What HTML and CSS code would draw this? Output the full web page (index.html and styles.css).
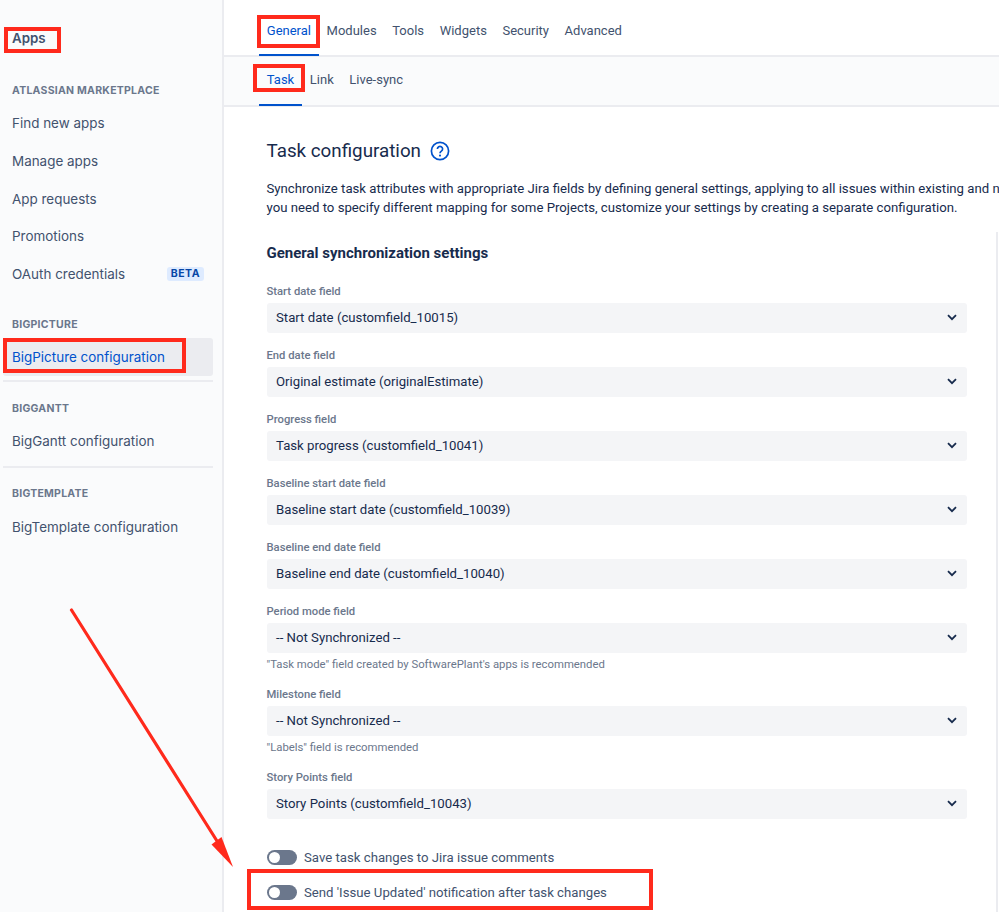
FILE: index.html
```html
<!DOCTYPE html>
<html lang="en">
<head>
<meta charset="utf-8">
<title>BigPicture configuration</title>
<link rel="stylesheet" href="styles.css">
</head>
<body>
<div class="page">
  <aside class="sidebar">
    <h2 class="side-title">Apps</h2>
    <h3 class="side-group first">ATLASSIAN MARKETPLACE</h3>
    <a class="side-link">Find new apps</a>
    <a class="side-link">Manage apps</a>
    <a class="side-link">App requests</a>
    <a class="side-link">Promotions</a>
    <a class="side-link">OAuth credentials <span class="beta">BETA</span></a>
    <h3 class="side-group">BIGPICTURE</h3>
    <a class="side-link active">BigPicture configuration</a>
    <div class="side-section">
      <h3 class="side-group inner">BIGGANTT</h3>
      <a class="side-link">BigGantt configuration</a>
    </div>
    <div class="side-section">
      <h3 class="side-group inner">BIGTEMPLATE</h3>
      <a class="side-link">BigTemplate configuration</a>
    </div>
  </aside>
  <main class="main">
    <nav class="tabs">
      <a class="tab current">General</a>
      <a class="tab">Modules</a>
      <a class="tab">Tools</a>
      <a class="tab">Widgets</a>
      <a class="tab">Security</a>
      <a class="tab">Advanced</a>
    </nav>
    <nav class="subtabs">
      <a class="tab current">Task</a>
      <a class="tab">Link</a>
      <a class="tab">Live-sync</a>
    </nav>
    <div class="content">
      <h1 class="page-title">Task configuration
        <svg class="help" viewBox="0 0 20 20" width="20" height="20" aria-hidden="true">
          <circle cx="10" cy="10" r="8.6" fill="none" stroke="#0052cc" stroke-width="1.7"/>
          <path d="M7.4 7.9a2.6 2.6 0 1 1 4 2.2c-.9.6-1.4 1-1.4 2.1" fill="none" stroke="#0052cc" stroke-width="1.7"/>
          <circle cx="10" cy="14.6" r="1.05" fill="#0052cc"/>
        </svg>
      </h1>
      <p class="intro">Synchronize task attributes with appropriate Jira fields by defining general settings, applying to all issues within existing and new Projects. If<br>you need to specify different mapping for some Projects, customize your settings by creating a separate configuration.</p>
      <section class="settings">
        <h2 class="settings-title">General synchronization settings</h2>
        <div class="field"><label class="field-label">Start date field</label><div class="select">Start date (customfield_10015)<svg class="chev" viewBox="0 0 10 7"><path d="M1 1.2l4 4 4-4"/></svg></div></div>
        <div class="field"><label class="field-label">End date field</label><div class="select">Original estimate (originalEstimate)<svg class="chev" viewBox="0 0 10 7"><path d="M1 1.2l4 4 4-4"/></svg></div></div>
        <div class="field"><label class="field-label">Progress field</label><div class="select">Task progress (customfield_10041)<svg class="chev" viewBox="0 0 10 7"><path d="M1 1.2l4 4 4-4"/></svg></div></div>
        <div class="field"><label class="field-label">Baseline start date field</label><div class="select">Baseline start date (customfield_10039)<svg class="chev" viewBox="0 0 10 7"><path d="M1 1.2l4 4 4-4"/></svg></div></div>
        <div class="field"><label class="field-label">Baseline end date field</label><div class="select">Baseline end date (customfield_10040)<svg class="chev" viewBox="0 0 10 7"><path d="M1 1.2l4 4 4-4"/></svg></div></div>
        <div class="field"><label class="field-label">Period mode field</label><div class="select">-- Not Synchronized --<svg class="chev" viewBox="0 0 10 7"><path d="M1 1.2l4 4 4-4"/></svg></div><p class="hint">"Task mode" field created by SoftwarePlant's apps is recommended</p></div>
        <div class="field"><label class="field-label">Milestone field</label><div class="select">-- Not Synchronized --<svg class="chev" viewBox="0 0 10 7"><path d="M1 1.2l4 4 4-4"/></svg></div><p class="hint">"Labels" field is recommended</p></div>
        <div class="field"><label class="field-label">Story Points field</label><div class="select">Story Points (customfield_10043)<svg class="chev" viewBox="0 0 10 7"><path d="M1 1.2l4 4 4-4"/></svg></div></div>
        <div class="toggle-row first"><span class="toggle"></span>Save task changes to Jira issue comments</div>
        <div class="toggle-row"><span class="toggle"></span>Send 'Issue Updated' notification after task changes</div>
      </section>
    </div>
  </main>
  <div class="mark mark-apps"></div>
  <div class="mark mark-bp"></div>
  <div class="mark mark-general"></div>
  <div class="mark mark-task"></div>
  <div class="mark mark-send"></div>
  <svg class="arrow" viewBox="0 0 999 912" aria-hidden="true">
    <path d="M71.5 610L217 841" stroke="#ff2a1c" stroke-width="3.2" stroke-linecap="round" fill="none"/>
    <path d="M233 867L211.500 844.500L221.500 837Z" fill="#ff2a1c"/>
  </svg>
</div>
</body>
</html>
```
FILE: styles.css
```css
* { box-sizing: border-box; }
html, body { margin: 0; padding: 0; }
body { background: #fff; color: #172b4d; font-family: Roboto, "Liberation Sans", sans-serif; font-size: 14px; }
.page { position: relative; display: flex; width: 999px; height: 912px; overflow: hidden; }

.sidebar { flex: 0 0 224px; height: 912px; padding: 0 9px 0 3px; background: #fafbfc; border-right: 2px solid #ebecf0; font-family: Inter, Roboto, sans-serif; }
.side-title { margin: 30px 0 0 9px; font-size: 13.300px; line-height: 17px; font-weight: 600; color: #42526e; }
.side-group { margin: 25px 0 0 9px; font-size: 10.500px; line-height: 14px; font-weight: 700; letter-spacing: .25px; color: #6b778c; }
.side-group.first { margin-top: 37px; }
.side-group.inner { margin-top: 0; }
.side-link { display: flex; align-items: center; justify-content: space-between; height: 37.700px; padding: 0 9px; font-size: 13.450px; color: #42526e; border-radius: 3px; }
.side-group.first + .side-link { margin-top: 6.300px; }
.side-link.active { margin-top: 6px; height: 38px; background: #ebecf0; color: #0052cc; }
.side-section { margin-top: 6px; padding-top: 19.500px; border-top: 2px solid #ebecf0; }
.active + .side-section { margin-top: 4px; padding-top: 20.500px; }
.side-section .side-link { height: 38px; margin-top: 6.500px; }
.active + .side-section .side-link { margin-top: 5.500px; }
.beta { padding: 1px 4px; border-radius: 3px; background: #deebff; color: #0747a6; font-size: 10.500px; line-height: 12px; font-weight: 700; letter-spacing: .5px; }

.main { flex: 1 1 auto; min-width: 0; padding-left: 35px; }
.main .subtabs, .main .tabs { margin-left: -35px; padding-left: 35px; }
.tabs { display: flex; height: 57px; border-bottom: 2px solid #ebecf0; }
.subtabs { display: flex; height: 50px; background: #fafbfc; border-bottom: 2px solid #ebecf0; }
.tab { position: relative; padding: 0 7.800px; line-height: 17px; color: #42526e; font-size: 13px; }
.tabs .tab { padding-top: 22px; }
.subtabs .tab { padding-top: 14px; }
.tab.current { color: #0052cc; }
.tab.current::after { content: ""; position: absolute; left: 0; right: 0; bottom: -1px; height: 2px; background: #0052cc; }

.content { padding: 0 0 0 7.500px; }
.page-title { display: flex; align-items: center; gap: 9px; margin: 32px 0 0; font-size: 18.800px; line-height: 24px; font-weight: 400; color: #172b4d; white-space: nowrap; }
.intro { margin: 16px 0 0; width: 760px; font-size: 13.200px; line-height: 19px; color: #172b4d; white-space: nowrap; }
.settings { margin-top: 15px; padding-top: 12px; height: 700px; width: 731px; border-right: 2px solid #ebecf0; }
.settings-title { margin: 0; font-size: 15px; line-height: 18px; font-weight: 700; color: #172b4d; }
.field { width: 700px; margin-top: 15px; }
.settings-title + .field { margin-top: 22px; }
.field-label { display: block; font-size: 11.250px; line-height: 15px; font-weight: 500; color: #6b778c; }
.select { display: flex; align-items: center; justify-content: space-between; height: 30px; margin-top: 4px; padding: 0 10px 2px 9.500px; background: #f4f5f7; border-radius: 3px; font-size: 13.200px; color: #172b4d; }
.chev { width: 10px; height: 7px; fill: none; stroke: #172b4d; stroke-width: 1.800; }
.hint { margin: 4px 0 0; font-size: 11.330px; line-height: 15px; color: #6b778c; }
.toggle-row { display: flex; align-items: center; gap: 7.500px; height: 17px; margin-top: 18px; font-size: 13.200px; color: #42526e; }
.toggle-row.first { margin-top: 30px; }
.toggle { position: relative; flex: 0 0 30px; height: 15px; border-radius: 8px; background: #6b778c; }
.toggle::before { content: ""; position: absolute; left: 2px; top: 2px; width: 11px; height: 11px; border-radius: 50%; background: #fff; }

.mark { position: absolute; border: 4px solid #ff2a1c; }
.mark-apps { left: 4px; top: 27px; width: 57px; height: 26px; }
.mark-bp { left: 3px; top: 338px; width: 183px; height: 35px; }
.mark-general { left: 257px; top: 15px; width: 63px; height: 33px; }
.mark-task { left: 253px; top: 64px; width: 52px; height: 28px; }
.mark-send { left: 247px; top: 869px; width: 406px; height: 41px; }
.arrow { position: absolute; left: 0; top: 0; width: 999px; height: 912px; pointer-events: none; }
```
